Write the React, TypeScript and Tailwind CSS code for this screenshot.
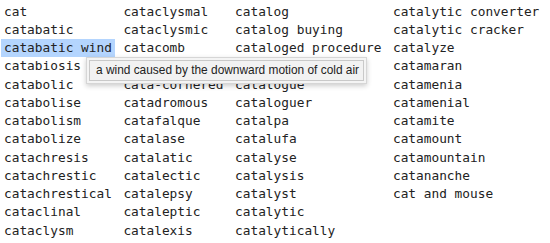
const columns: string[][] = [
  ['cat', 'catabatic', 'catabatic wind', 'catabiosis', 'catabolic', 'catabolise', 'catabolism', 'catabolize', 'catachresis', 'catachrestic', 'catachrestical', 'cataclinal', 'cataclysm'],
  ['cataclysmal', 'cataclysmic', 'catacomb', 'catacorner', 'cata-cornered', 'catadromous', 'catafalque', 'catalase', 'catalatic', 'catalectic', 'catalepsy', 'cataleptic', 'catalexis'],
  ['catalog', 'catalog buying', 'cataloged procedure', 'cataloger', 'catalogue', 'cataloguer', 'catalpa', 'catalufa', 'catalyse', 'catalysis', 'catalyst', 'catalytic', 'catalytically'],
  ['catalytic converter', 'catalytic cracker', 'catalyze', 'catamaran', 'catamenia', 'catamenial', 'catamite', 'catamount', 'catamountain', 'catananche', 'cat and mouse'],
];

const selected = 'catabatic wind';

export default function App() {
  return (
    <div className="relative w-[550px] h-[243px] bg-white overflow-hidden">
      <div
        className="grid grid-flow-col grid-rows-[repeat(13,18.25px)] justify-start gap-x-[5.5px] pl-[1px] pt-[2.5px] text-[12.8px] leading-[18.25px] text-[#222]"
        style={{ fontFamily: '"DejaVu Sans Mono", monospace' }}
      >
        {columns.flatMap((col, ci) => {
          const cells = col.map((word) => (
            <span
              key={ci + word}
              className={`px-[3px] whitespace-pre ${word === selected ? 'bg-[#b4d5fe]' : ''}`}
            >
              {word}
            </span>
          ));
          while (cells.length < 13) cells.push(<span key={ci + '-' + cells.length} />);
          return cells;
        })}
      </div>

      {/* tooltip */}
      <div className="absolute left-[86px] top-[57px] w-[281px] h-[27px] bg-[#f4f4f4] border border-[#d6d6d6] shadow-[0_2px_5px_rgba(0,0,0,0.2)] p-[2px]">
        <div
          className="h-full border border-[#c9c9c9] bg-[#f2f2f2] flex items-center pl-[6px] text-[11.9px] text-[#222]"
          style={{ fontFamily: '"Liberation Sans", Arial, sans-serif' }}
        >
          a wind caused by the downward motion of cold air
        </div>
      </div>
    </div>
  );
}
